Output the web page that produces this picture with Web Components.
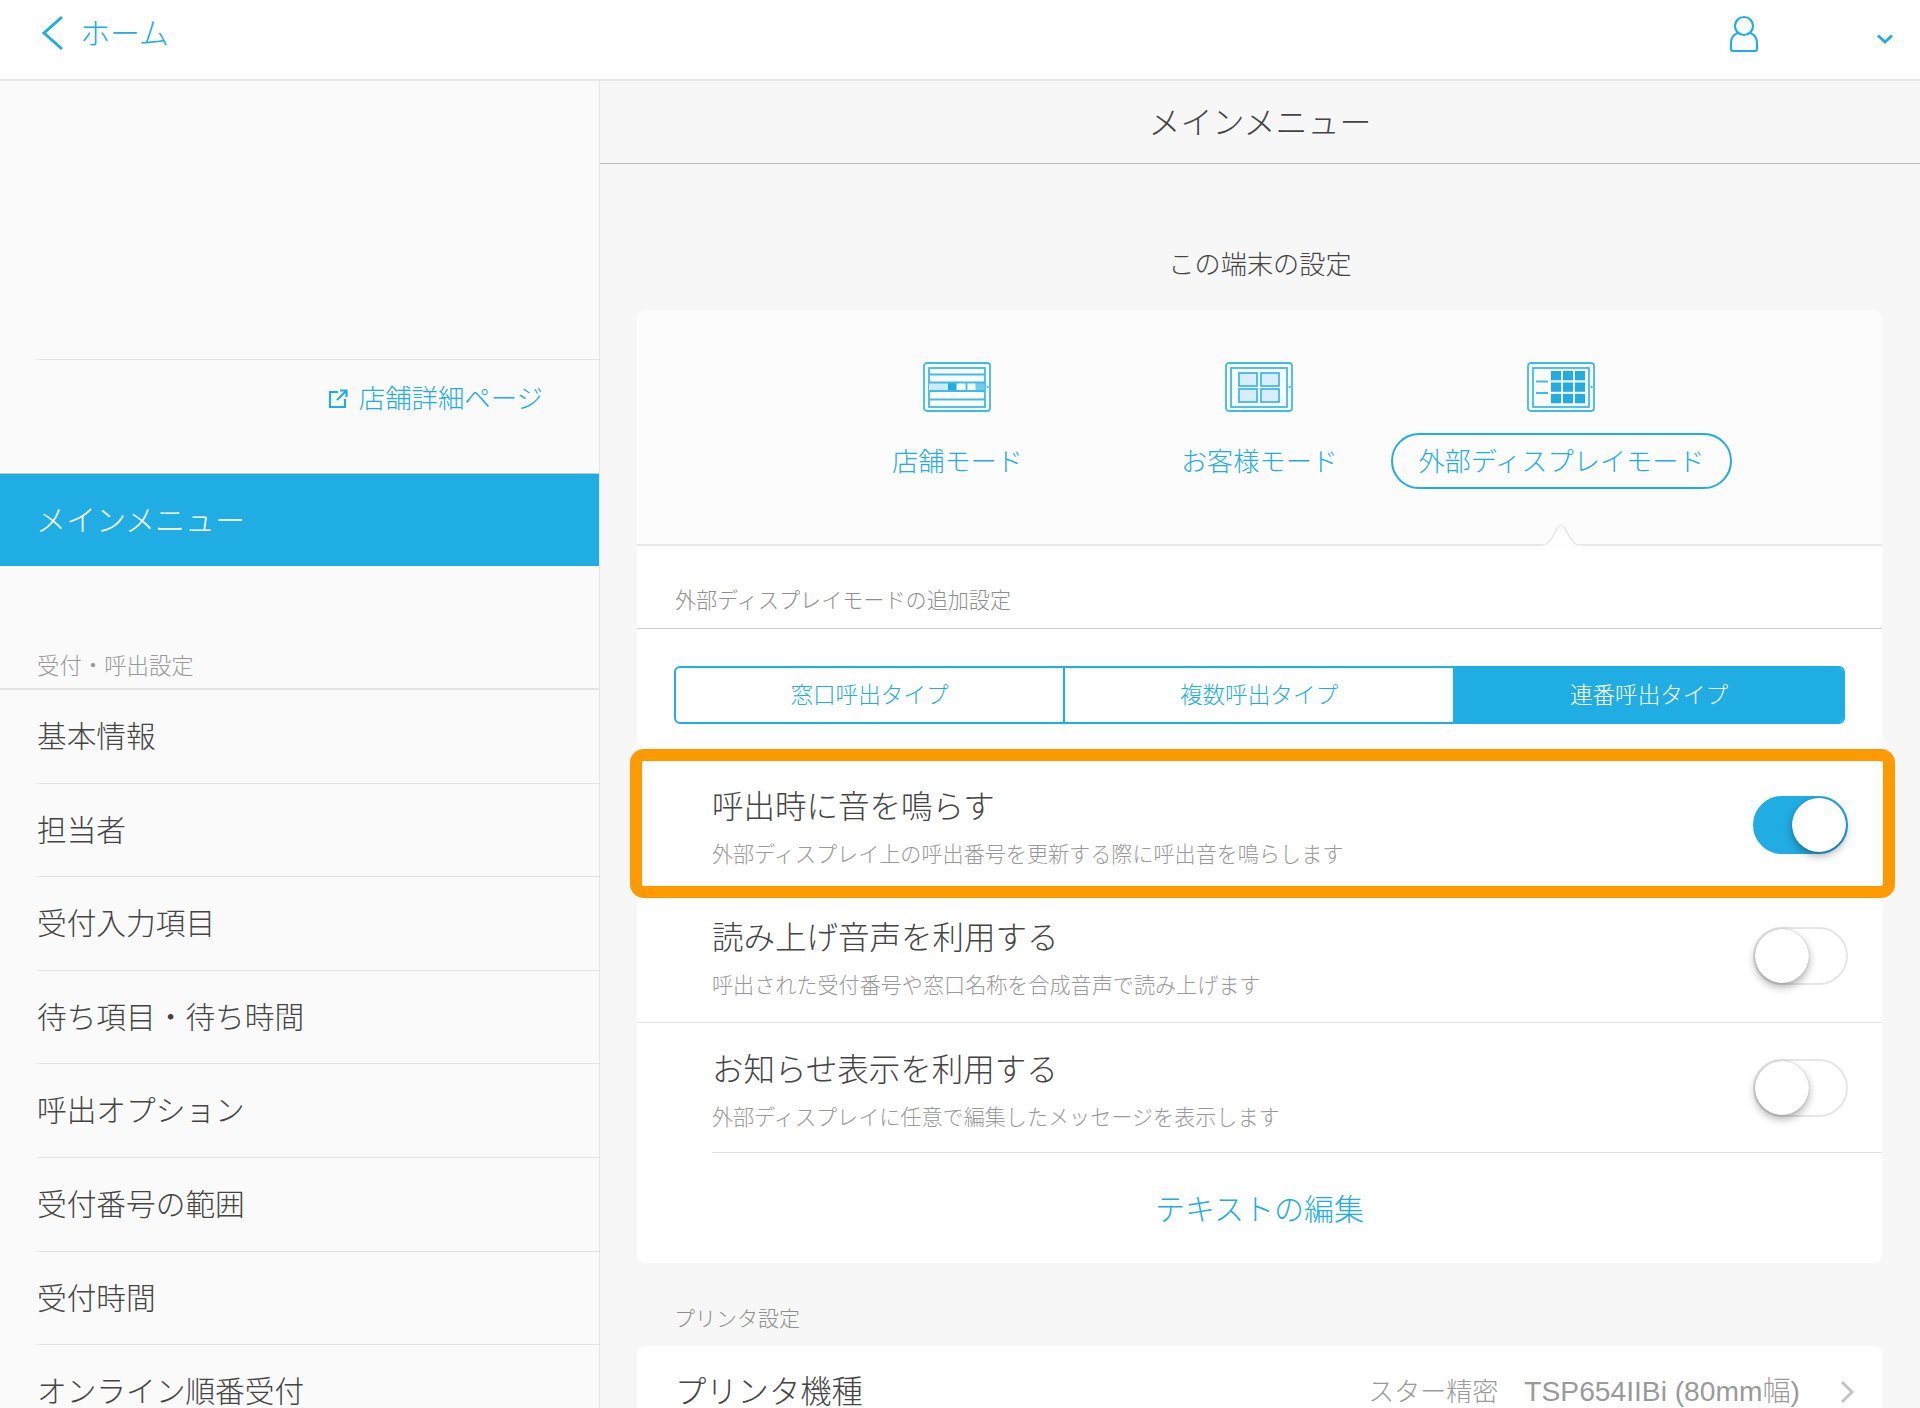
<!DOCTYPE html>
<html lang="ja">
<head>
<meta charset="utf-8">
<title>メインメニュー</title>
<style>
    html, body { margin: 0; height: 100%; }
    body {
        width: 1920px;
        height: 1408px;
        overflow: hidden;
        background: #f7f7f7;
        color: #444;
        font-family: "Noto Sans CJK JP", "Noto Sans", sans-serif;
        font-weight: 300;
    }
</style>
</head>
<body>
<app-shell>
    <app-header slot="header"></app-header>
    <side-nav slot="side">
        <nav-item>基本情報</nav-item>
        <nav-item>担当者</nav-item>
        <nav-item>受付入力項目</nav-item>
        <nav-item>待ち項目・待ち時間</nav-item>
        <nav-item>呼出オプション</nav-item>
        <nav-item>受付番号の範囲</nav-item>
        <nav-item>受付時間</nav-item>
        <nav-item>オンライン順番受付</nav-item>
    </side-nav>
    <main-panel slot="main">
        <mode-card>
            <mode-tab icon="store">店舗モード</mode-tab>
            <mode-tab icon="guest">お客様モード</mode-tab>
            <mode-tab icon="display" selected>外部ディスプレイモード</mode-tab>
            <setting-row slot="rows" highlighted on h="131" label="呼出時に音を鳴らす" note="外部ディスプレイ上の呼出番号を更新する際に呼出音を鳴らします"></setting-row>
            <setting-row slot="rows" h="131.500" label="読み上げ音声を利用する" note="呼出された受付番号や窓口名称を合成音声で読み上げます"></setting-row>
            <setting-row slot="rows" plain h="129.500" label="お知らせ表示を利用する" note="外部ディスプレイに任意で編集したメッセージを表示します"></setting-row>
        </mode-card>
        <printer-card></printer-card>
    </main-panel>
</app-shell>

<script>
const BLUE = '#1fade4';

class AppShell extends HTMLElement {
    constructor() {
        super();
        this.attachShadow({ mode: 'open' });
        this.shadowRoot.innerHTML = `
            <style>
                :host { display: grid; grid-template-columns: 600px 1320px; grid-template-rows: 81px 1327px; width: 1920px; height: 1408px; }
                .top { grid-column: 1 / 3; }
            </style>
            <div class="top"><slot name="header"></slot></div>
            <slot name="side"></slot>
            <slot name="main"></slot>
        `;
    }
}

class AppHeader extends HTMLElement {
    constructor() {
        super();
        this.attachShadow({ mode: 'open' });
        this.shadowRoot.innerHTML = `
            <style>
                :host { display: flex; align-items: center; height: 79px; background: #fff; border-bottom: 2px solid #e8e8e8; color: ${BLUE}; padding: 0 27px 0 41px; font-size: 30px; }
                .home { line-height: 40px; margin: -17px 0 0 16px; flex: 1; }
                svg { display: block; fill: none; stroke: ${BLUE}; }
                .back { margin-top: -13px; }
                .user { margin: -11px 118px 0 0; }
                .more { margin-top: -2px; }
            </style>
            <svg class="back" width="23" height="36" viewBox="0 0 23 36"><path d="M21 2 L3 18 L21 34" stroke-width="3"/></svg>
            <span class="home">ホーム</span>
            <svg class="user" width="30" height="38" viewBox="0 0 30 38"><circle cx="15" cy="11" r="9" stroke-width="2.200"/><path d="M8.500 18 C4 20 2 23 2 28 V34 Q2 36 4 36 H26 Q28 36 28 34 V28 C28 23 26 20 21.500 18" stroke-width="2.200"/></svg>
            <svg class="more" width="16" height="10" viewBox="0 0 16 10"><path d="M1 1.500 L8 8 L15 1.500" stroke-width="2.800"/></svg>
        `;
    }
}

class SideNav extends HTMLElement {
    constructor() {
        super();
        this.attachShadow({ mode: 'open' });
        this.shadowRoot.innerHTML = `
            <style>
                :host { display: block; background: #fafafa; border-right: 1px solid #e4e4e4; overflow: hidden; height: 1327px; box-sizing: border-box; width: 600px; }
                .store { margin: 278px 0 0 37px; border-top: 1px solid #e2e2e2; height: 114px; box-sizing: border-box; display: flex; justify-content: flex-end; padding: 18px 56px 0 0; color: ${BLUE}; font-size: 26.400px; line-height: 38px; }
                .store svg { display: block; margin: 11px 11px 0 0; fill: none; stroke: ${BLUE}; stroke-width: 2.200; }
                .active { height: 92px; background: ${BLUE}; color: #fff; font-size: 30px; line-height: 88px; padding-left: 36px; border-top: 1px solid #c6c6c6; }
                .label { margin-top: 78px; padding-left: 37px; font-size: 22.400px; line-height: 41px; color: #999; height: 44px; border-bottom: 2px solid #e2e2e2; }
            </style>
            <div class="store">
                <svg width="20" height="20" viewBox="0 0 20 20"><path d="M10 3 H2 V18 H17 V10"/><path d="M9 11 L18 2 M12 1.500 H18.500 V8"/></svg>
                <span>店舗詳細ページ</span>
            </div>
            <div class="active">メインメニュー</div>
            <div class="label">受付・呼出設定</div>
            <slot></slot>
        `;
    }
}

class NavItem extends HTMLElement {
    constructor() {
        super();
        this.attachShadow({ mode: 'open' });
        this.shadowRoot.innerHTML = `
            <style>
                :host { display: block; margin-left: 37px; height: 92.600px; line-height: 89px; font-size: 29.700px; color: #444; border-bottom: 1px solid #e2e2e2; }
            </style>
            <slot></slot>
        `;
    }
}

class MainPanel extends HTMLElement {
    constructor() {
        super();
        this.attachShadow({ mode: 'open' });
        this.shadowRoot.innerHTML = `
            <style>
                :host { display: block; background: #f7f7f7; height: 1327px; overflow: hidden; }
                .title { height: 82px; box-sizing: content-box; border-bottom: 1px solid #bdbdbd; text-align: center; font-size: 32px; line-height: 79px; color: #444; }
                .sub { text-align: center; font-size: 26.200px; line-height: 38px; margin: 80px 0 28px; color: #444; }
                .cards { padding: 0 38px 0 37px; }
            </style>
            <div class="title">メインメニュー</div>
            <div class="sub">この端末の設定</div>
            <div class="cards"><slot></slot></div>
        `;
    }
}

const ICONS = {
    store: `
        <rect x="6" y="20.500" width="19" height="8.500" fill="#cbeaf8" stroke="none"/>
        <rect x="25" y="20.500" width="8.500" height="8.500" fill="${BLUE}" stroke="none"/>
        <rect x="52.500" y="20.500" width="9" height="8.500" fill="#6fcbef" stroke="none"/>
        <path d="M6 12.500 H62 M6 20.500 H62 M6 29 H62 M6 37.500 H62 M43.500 20.500 V29"/>`,
    guest: `
        <g fill="#d7eefa"><rect x="14" y="11" width="18" height="13"/><rect x="36" y="11" width="18" height="13"/><rect x="14" y="27" width="18" height="13"/><rect x="36" y="27" width="18" height="13"/></g>`,
    display: `
        <g fill="${BLUE}" stroke="none">
            <rect x="24" y="9" width="10" height="9.300"/><rect x="36" y="9" width="10" height="9.300"/><rect x="48" y="9" width="10" height="9.300"/>
            <rect x="24" y="20.500" width="10" height="9.300"/><rect x="36" y="20.500" width="10" height="9.300"/><rect x="48" y="20.500" width="10" height="9.300"/>
            <rect x="24" y="32" width="10" height="9.300"/><rect x="36" y="32" width="10" height="9.300"/><rect x="48" y="32" width="10" height="9.300"/>
        </g>
        <path d="M9 19.500 H21 M9 31 H21"/>`
};

class ModeTab extends HTMLElement {
    constructor() {
        super();
        this.attachShadow({ mode: 'open' });
        const selected = this.hasAttribute('selected');
        this.shadowRoot.innerHTML = `
            <style>
                :host { display: flex; flex-direction: column; align-items: center; width: 302px; color: ${BLUE}; font-size: 26.200px; position: relative; }
                svg { display: block; margin-left: -2px; fill: none; stroke: #3fbbe9; stroke-width: 1.800; }
                .name { margin-top: 21px; height: 56px; box-sizing: border-box; line-height: 50px; padding: 0 25px; border: 2px solid ${selected ? BLUE : 'transparent'}; border-radius: 28px; white-space: nowrap; }
            </style>
            <svg width="68" height="50" viewBox="0 0 68 50">
                <rect x="1" y="1" width="66" height="48" rx="3"/>
                <rect x="6" y="6" width="56" height="39"/>
                <circle cx="64.700" cy="25" r="1" fill="${BLUE}" stroke="none"/>
                ${ICONS[this.getAttribute('icon')]}
            </svg>
            <div class="name"><slot></slot></div>
        `;
    }
}

class SegmentTabs extends HTMLElement {
    constructor() {
        super();
        this.attachShadow({ mode: 'open' });
        this.shadowRoot.innerHTML = `
            <style>
                :host { display: grid; grid-template-columns: 387px 390px 1fr; height: 58px; box-sizing: border-box; border: 2px solid ${BLUE}; border-radius: 6px; overflow: hidden; color: ${BLUE}; font-size: 22.600px; line-height: 52px; text-align: center; background: #fff; }
                div + div { border-left: 2px solid ${BLUE}; }
                .on { background: ${BLUE}; color: #fff; }
            </style>
            <div>窓口呼出タイプ</div>
            <div>複数呼出タイプ</div>
            <div class="on">連番呼出タイプ</div>
        `;
    }
}

class ModeCard extends HTMLElement {
    constructor() {
        super();
        this.attachShadow({ mode: 'open' });
        this.shadowRoot.innerHTML = `
            <style>
                :host { display: block; background: #fff; border-radius: 8px; position: relative; }
                .modes { display: flex; justify-content: center; height: 236px; box-sizing: border-box; padding-top: 52px; background: #fcfcfc; border-radius: 8px 8px 0 0; border-bottom: 2px solid #e8e8e8; position: relative; }
                .notch { position: absolute; left: 900px; top: 214px; display: block; }
                .head { height: 83px; box-sizing: border-box; padding: 33px 0 0 38px; font-size: 21.100px; line-height: 40px; color: #8e8e8e; border-bottom: 1px solid #cfcfcf; }
                .seg { padding: 37px 37px 36px 37px; }
                .link { margin-left: 75px; border-top: 1px solid #e2e2e2; height: 111px; box-sizing: border-box; text-align: center; color: ${BLUE}; font-size: 30px; line-height: 108px; padding-right: 75px; }
            </style>
            <div class="modes">
                <slot></slot>
                <svg class="notch" width="48" height="23" viewBox="0 0 48 23"><path d="M0 21.500 C10 21.500 12 19 16 12 C19 7 21 1 24 1 C27 1 29 7 32 12 C36 19 38 21.500 48 21.500" fill="#fff" stroke="#e2e2e2" stroke-width="1.200"/><rect x="2" y="21.500" width="44" height="3" fill="#fff"/></svg>
            </div>
            <div class="head">外部ディスプレイモードの追加設定</div>
            <div class="seg"><segment-tabs></segment-tabs></div>
            <slot name="rows"></slot>
            <div class="link">テキストの編集</div>
        `;
    }
}

class SettingRow extends HTMLElement {
    constructor() {
        super();
        this.attachShadow({ mode: 'open' });
        const on = this.hasAttribute('on');
        const plain = this.hasAttribute('plain');
        const highlighted = this.hasAttribute('highlighted');
        this.shadowRoot.innerHTML = `
            <style>
                :host { display: block; position: relative; height: ${this.getAttribute('h')}px; box-sizing: border-box; padding: 24px 34px 0 75px; ${plain ? '' : 'border-bottom: 1px solid #e2e2e2;'} }
                .row { display: flex; justify-content: space-between; }
                .label { font-size: 31.500px; line-height: 40px; color: #444; }
                .note { font-size: 21.100px; line-height: 28px; margin-top: 15px; color: #999; }
                .hl { position: absolute; left: -7px; right: -13px; top: -11px; height: 149px; box-sizing: border-box; border: 12px solid #ff9900; border-radius: 14px; pointer-events: none; }
                toggle-switch { margin-top: 12px; }
            </style>
            <div class="row">
                <div>
                    <div class="label">${this.getAttribute('label')}</div>
                    <div class="note">${this.getAttribute('note')}</div>
                </div>
                <toggle-switch ${on ? 'on' : ''}></toggle-switch>
            </div>
            ${highlighted ? '<div class="hl"></div>' : ''}
        `;
    }
}

class ToggleSwitch extends HTMLElement {
    constructor() {
        super();
        this.attachShadow({ mode: 'open' });
        const on = this.hasAttribute('on');
        this.shadowRoot.innerHTML = `
            <style>
                :host { display: flex; position: relative; width: 95px; height: 58px; box-sizing: border-box; border-radius: 29px; justify-content: ${on ? 'flex-end' : 'flex-start'}; background: ${on ? BLUE : '#fff'}; border: 2px solid ${on ? BLUE : '#e6e6e6'}; }
                .knob { width: 54px; height: 54px; border-radius: 50%; background: #fff; box-shadow: 0 4px 8px rgba(0,0,0,.32), 0 0 1px rgba(0,0,0,.35); }
            </style>
            <div class="knob"></div>
        `;
    }
}

class PrinterCard extends HTMLElement {
    constructor() {
        super();
        this.attachShadow({ mode: 'open' });
        this.shadowRoot.innerHTML = `
            <style>
                :host { display: block; margin-top: 39px; }
                .label { padding-left: 37px; font-size: 21px; line-height: 30px; color: #8e8e8e; margin-bottom: 14px; }
                .card { background: #fff; border-radius: 8px 8px 0 0; height: 100px; display: flex; align-items: flex-start; padding: 24px 28px 0 38px; box-sizing: border-box; line-height: 40px; }
                .name { font-size: 31.300px; flex: 1; color: #444; }
                .value { font-size: 26px; color: #9a9a9a; white-space: nowrap; margin-right: 40px; }
                .model { font-family: "Liberation Sans", "Noto Sans CJK JP", sans-serif; font-size: 28.200px; margin-left: 26px; }
                svg { display: block; margin-top: 10px; fill: none; stroke: #c4c4c4; stroke-width: 3; }
            </style>
            <div class="label">プリンタ設定</div>
            <div class="card">
                <span class="name">プリンタ機種</span>
                <span class="value">スター精密<span class="model">TSP654IIBi (80mm幅)</span></span>
                <svg width="14" height="24" viewBox="0 0 14 24"><path d="M2 2 L12 12 L2 22"/></svg>
            </div>
        `;
    }
}

customElements.define('toggle-switch', ToggleSwitch);
customElements.define('segment-tabs', SegmentTabs);
customElements.define('setting-row', SettingRow);
customElements.define('mode-tab', ModeTab);
customElements.define('mode-card', ModeCard);
customElements.define('printer-card', PrinterCard);
customElements.define('main-panel', MainPanel);
customElements.define('nav-item', NavItem);
customElements.define('side-nav', SideNav);
customElements.define('app-header', AppHeader);
customElements.define('app-shell', AppShell);
</script>
</body>
</html>
